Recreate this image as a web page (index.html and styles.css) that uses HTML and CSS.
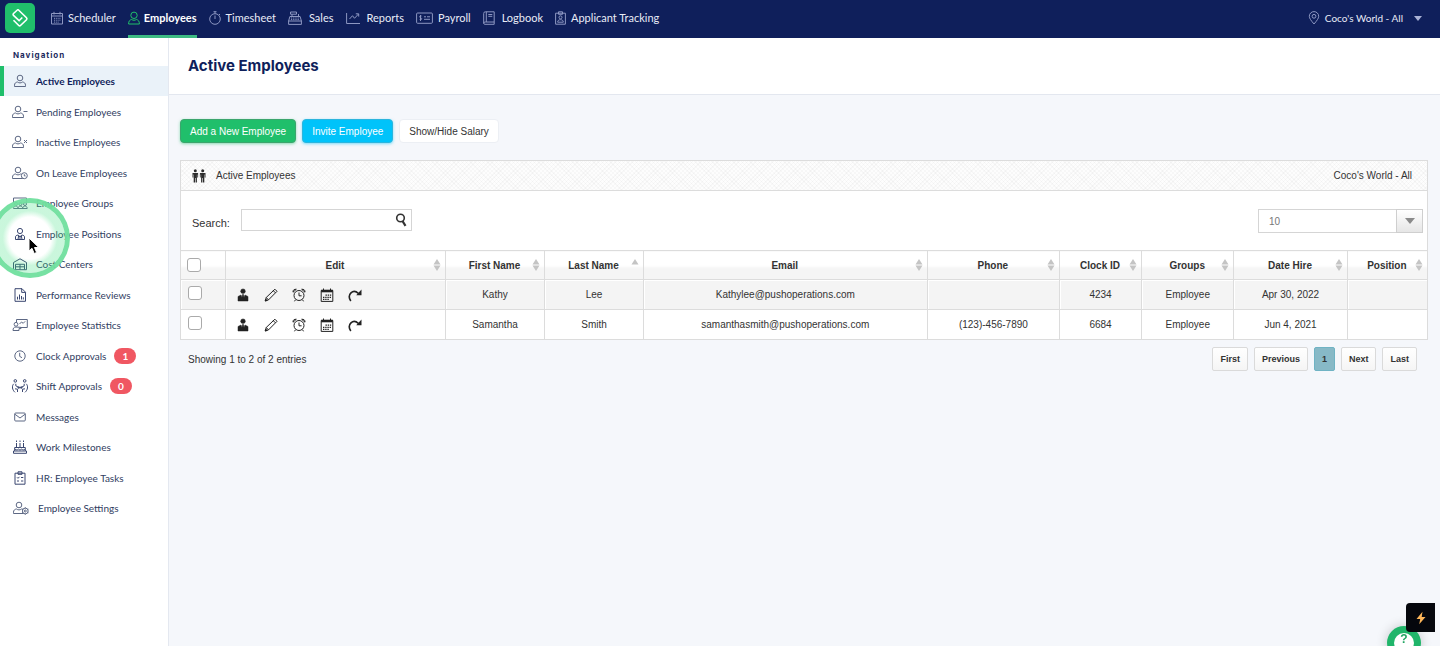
FILE: index.html
```html
<!DOCTYPE html>
<html lang="en">
  <head>
    <meta charset="utf-8">
    <title>Active Employees</title>
    <link rel="stylesheet" href="styles.css">
  </head>

  <body>
    <!-- shared icons -->
    <svg class="sprite" aria-hidden="true">
      <symbol id="i-user" viewBox="0 0 14 14"><circle cx="7" cy="4" r="2.800"/><path d="M1.500 12.500v-1.300c0-2 1.300-3 3-3.200 1.600 1.200 3.400 1.200 5 0 1.700.2 3 1.200 3 3.200v1.300z"/></symbol>
      <symbol id="i-sort" viewBox="0 0 8 12"><path d="M4 0l3.500 5.500h-7zM4 12L.5 6.500h7z"/></symbol>
      <symbol id="i-sort-asc" viewBox="0 0 8 12"><path d="M4 0l3.500 5.500h-7z"/></symbol>
      <symbol id="i-profile" viewBox="0 0 14 14"><circle cx="7" cy="3.200" r="2.300"/><path d="M2 13V8.500L5 7l1 2.500.5-3h1l.5 3L9 7l3 1.500V13z"/></symbol>
      <symbol id="i-pencil" viewBox="0 0 14 14"><path d="M1.300 12.900l.9-3.400 8.700-8.300 2.100 2.100-8.500 8.600zM2.200 9.500l2.300 2.400M9.300 2.700l2.100 2.100"/><path d="M1.200 13l1.900-.5-1.400-1.400z" fill="currentColor"/></symbol>
      <symbol id="i-alarm" viewBox="0 0 14 14"><circle cx="7" cy="7.500" r="5"/><path d="M7 4.500v3.300h2.600M3.500 11.700l-1 1.600M10.500 11.700l1 1.600M1 4.200c-.2-2.200 1.300-3.200 3.300-2.900zM13 4.200c.2-2.200-1.300-3.200-3.300-2.900z"/></symbol>
      <symbol id="i-calendar" viewBox="0 0 14 14"><path d="M1.200 2.500h11.600v10.900H1.200z"/><path d="M1.200 3h11.600" stroke-width="2.600"/><path d="M3.500.5v2M10.500.5v2"/><path d="M5.500 7.200h5.700M3 9.300h8.200M3 11.400h6" stroke-width="1.300" stroke-dasharray="1.400 .8"/></symbol>
      <symbol id="i-redo" viewBox="0 0 14 14"><path d="M2.800 13C-1.500 6.500 5 .5 10.500 5.500" fill="none" stroke-width="1.600"/><path d="M13.500 1.500v5.800H8.200z" stroke="none"/></symbol>
    </svg>

    <header class="topbar">
      <a class="logo" href="#" aria-label="Push">
        <svg viewBox="0 0 30 30"><path d="M13 6.500l8.500 8.300a1.500 1.500 0 0 1 0 2L15.500 22.500a1.200 1.200 0 0 1-1.700 0l-5.300-5.300M12.900 6.500l-4.400 4a1.300 1.300 0 0 0 0 1.900l5.600 5.300 3.200-3.200"/></svg>
      </a>
      <nav class="mainnav">
        <a href="#">
          <svg width="12" height="14" viewBox="0 0 12 14"><path d="M.5 2.500h11v10.500H.5zM.5 5h11M3 .8v2.700M9 .8v2.700"/><path d="M3 7.300h7M3 9.200h7M3 11.100h5" stroke-dasharray="1.200 1"/></svg>
          Scheduler
        </a>
        <a class="active" href="#">
          <svg width="12" height="14" viewBox="0 0 12 14"><circle cx="6" cy="4.300" r="3.200"/><path d="M.6 13c0-2.800 1-4 3-4.500 1.500 1 3.300 1 4.800 0 2 .5 3 1.700 3 4.500z"/></svg>
          Employees
        </a>
        <a href="#">
          <svg width="12" height="14" viewBox="0 0 12 14"><circle cx="6" cy="8" r="5.300"/><path d="M6 4.500V8M4.500.7h3M6 .7v2M10 3l1 1"/></svg>
          Timesheet
        </a>
        <a class="wide" href="#">
          <svg width="14" height="14" viewBox="0 0 14 14"><path d="M.6 10h12.800v3.400H.6zM.6 10l1.300-4.500h10.200L13.400 10M2.500 1h6v2.200h-6zM4 3.200v2.300M10.500 3v2.500"/><path d="M3 7h8M3 8.600h8" stroke-dasharray="1.200 1"/></svg>
          Sales
        </a>
        <a class="wide" href="#">
          <svg width="14" height="14" viewBox="0 0 14 14"><path d="M.6 2v10.500H14M3.500 8l3-3.300 2 2.600L12.500 3M9.800 2.800h2.900v2.800"/></svg>
          Reports
        </a>
        <a href="#">
          <svg width="17" height="14" viewBox="0 0 17 14"><rect x=".6" y="2" width="15.800" height="10.300" rx="1"/><path d="M5.500 5c-2-.7-2.400 1.400-1 1.700 2 .5 1.500 2.500-.8 1.800M4.500 4v6M8 5.800h2M11 5.800h3M8 8.300h6"/></svg>
          Payroll
        </a>
        <a class="wide" href="#">
          <svg width="12" height="14" viewBox="0 0 12 14"><path d="M2.500.8h8.700v10.200H2.500a1.500 1.500 0 0 0-1.800 1.300V2.500A1.700 1.700 0 0 1 2.500.8zM.7 12.200c0 .8.600 1.100 1.300 1.100h9.200V11M3.300.8V11M5.300 3.500h4M5.300 5.300h4"/></svg>
          Logbook
        </a>
        <a href="#">
          <svg width="11" height="14" viewBox="0 0 11 14"><path d="M.6 2.200h9.800v11H.6zM3.500.8h4v2.500h-4z"/><circle cx="5.500" cy="6.300" r="1.500"/><path d="M2.700 11.200c0-1.700 1-2.500 2.800-2.500s2.800.8 2.800 2.500z"/></svg>
          Applicant Tracking
        </a>
      </nav>
      <button class="location" type="button">
        <svg width="12" height="14" viewBox="0 0 12 14"><path d="M6 13C3 9.500 1.300 7.300 1.300 5.300a4.700 4.700 0 0 1 9.400 0C10.700 7.300 9 9.500 6 13z"/><circle cx="6" cy="5.300" r="1.900"/></svg>
        Coco's World - All
        <span class="caret"></span>
      </button>
    </header>

    <div class="page">
      <aside class="sidebar">
        <h2>Navigation</h2>
        <ul>
          <li><a class="active" href="#"><svg viewBox="0 0 16 14"><use href="#i-user" x="1" width="14" height="14"/></svg>Active Employees</a></li>
          <li><a href="#"><svg viewBox="0 0 16 14"><use href="#i-user" x="-1" width="14" height="14"/><path d="M11.500 6.500h4"/></svg>Pending Employees</a></li>
          <li><a href="#"><svg viewBox="0 0 16 14"><use href="#i-user" x="-1" width="14" height="14"/><path d="M12 5l3 3M15 5l-3 3"/></svg>Inactive Employees</a></li>
          <li><a href="#"><svg viewBox="0 0 16 14"><use href="#i-user" x="-1" width="14" height="14"/><circle cx="12.300" cy="9.700" r="3" fill="#fff"/><path d="M12.300 8.200v1.700h1.300"/></svg>On Leave Employees</a></li>
          <li><a href="#"><svg viewBox="0 0 16 14"><path d="M1.500 7V2h13v5"/><circle cx="4" cy="8" r="1.500"/><circle cx="8.500" cy="8" r="1.500"/><circle cx="13" cy="8" r="1.500"/><path d="M1.500 12.500c0-3.300 4.500-3.300 4.500 0 0-3.300 4.700-3.300 4.700 0 0-3.300 4.500-3.300 4.500 0z"/></svg>Employee Groups</a></li>
          <li><a href="#"><svg class="strong" viewBox="0 0 16 14"><circle cx="8" cy="4" r="2.600"/><path d="M3.500 12.500V10c0-1.200 1-1.800 2.700-2L8 10l1.800-2c1.700.2 2.700.8 2.700 2v2.500zM8 10v2.500M6.700 8.500l-.7 4M9.300 8.500l.7 4"/></svg>Employee Positions</a></li>
          <li><a href="#"><svg class="strong" viewBox="0 0 16 14"><path d="M1.500 12.700V5.500L8 1.800l6.500 3.700v7.200zM3.500 12.500V7.300h9v5.200M3.500 9.800h9M8 7.300v5.200"/></svg>Cost Centers</a></li>
          <li><a href="#"><svg class="strong" viewBox="0 0 16 14"><path d="M3 .7h7l3.500 3.500v9.100H3zM9.700.7v3.700h3.800M5.500 11.500V8.700M7.500 11.500V6.500M9.500 11.500V8M11.300 11.500V9.300"/></svg>Performance Reviews</a></li>
          <li><a href="#"><svg viewBox="0 0 16 14"><path d="M4.500 4V1.500h10.800v8H8.500M7.500 6l2-2 1.700 1.300 2-2"/><circle cx="4" cy="6.300" r="1.900"/><path d="M1 12.500c0-2.200.8-3.500 3-3.500l5 .4 0 1.200H7v1.900z"/></svg>Employee Statistics</a></li>
          <li><a href="#"><svg viewBox="0 0 16 14"><circle cx="8" cy="7" r="5.200"/><path d="M7.700 3.800v3.600l2.300 1.300"/></svg>Clock Approvals <span class="badge">1</span></a></li>
          <li><a href="#"><svg class="strong" viewBox="0 0 16 14"><circle cx="3.300" cy="1.900" r="1.300"/><circle cx="12.700" cy="1.900" r="1.300"/><path d="M1.800 4.800C-.5 7 .3 11 3 13.300M14.200 4.800c2.300 2.200 1.500 6.200-1.200 8.500M3.800 4.800v2l2.700 1.400M12.200 4.800v2L9.500 8.200M3 9.800l2.500.4v2.800M13 9.800l-2.500.4v2.800M5.500 8.600h5M6.800 7.200v2.700M9.200 7.200v2.700"/></svg>Shift Approvals <span class="badge">0</span></a></li>
          <li><a href="#"><svg viewBox="0 0 16 14"><rect x="2.700" y="3" width="10.600" height="8" rx="1"/><path d="M3 4.300l5 3.700 5-3.700"/></svg>Messages</a></li>
          <li><a href="#"><svg class="strong" viewBox="0 0 16 14"><path d="M2.700 11V7.500h10.600V11M1.500 11h13v2.300h-13zM2.700 9c1.800 1.200 2.600 1.200 3.600 0 1.200 1.200 2.300 1.200 3.500 0 1 1.200 2 1.200 3.500 0M4.500 7.500V3M8 7.500V3M11.500 7.500V3M4.500.5v1.500M8 .5v1.500M11.500.5v1.500"/></svg>Work Milestones</a></li>
          <li><a href="#"><svg class="strong" viewBox="0 0 16 14"><path d="M3 2.200h10v11H3zM6 .8h4v2.500H6zM5 6.300l1 1 1.500-1.500M9 6.500h2.300M5 10h2M9 10h2.300"/></svg>HR: Employee Tasks</a></li>
          <li><a class="settings" href="#"><svg viewBox="0 0 16 14"><use href="#i-user" x="-1" width="14" height="14"/><circle cx="12.300" cy="10" r="2.900" fill="#fff"/><circle cx="12.300" cy="10" r="1"/><path d="M12.300 6.300v1M12.300 12.700v1M9.200 8.200l.9.500M14.500 11.300l.9.500M9.200 11.800l.9-.5M14.500 8.700l.9-.5"/></svg>Employee Settings</a></li>
        </ul>
      </aside>

      <main>
        <div class="titlebar">
          <h1>Active Employees</h1>
        </div>

        <div class="content">
          <div class="actions">
            <button class="btn btn-green" type="button">Add a New Employee</button>
            <button class="btn btn-blue" type="button">Invite Employee</button>
            <button class="btn" type="button">Show/Hide Salary</button>
          </div>

          <section class="panel">
            <div class="panel-head">
              <svg width="14" height="14" viewBox="0 0 14 14"><circle cx="3.300" cy="1.800" r="1.500"/><circle cx="10.700" cy="1.800" r="1.500"/><path d="M.5 4h5.600v4.500H5.300V5.500h-.4V13.500H3.600V9h-.6v4.500H1.700V5.500h-.4v3H.5zM7.900 4h5.600v4.500h-.8V5.500h-.4v8H11V9h-.6v4.500H9.100v-8h-.4v3h-.8z"/></svg>
              <span>Active Employees</span>
              <span class="where">Coco's World - All</span>
            </div>

            <div class="toolbar">
              <label for="search">Search:</label>
              <div class="search">
                <input id="search" type="text">
                <svg width="12" height="14" viewBox="0 0 12 14"><circle cx="5.500" cy="5" r="3.800"/><path d="M7.500 8l3 4.800" stroke-width="2.200"/></svg>
              </div>
              <div class="length">
                <select aria-label="Entries per page">
                  <option>10</option>
                  <option>25</option>
                  <option>50</option>
                </select>
                <span class="arrow"></span>
              </div>
            </div>

            <table>
              <colgroup>
                <col class="c-check"><col class="c-edit"><col class="c-first"><col class="c-last"><col class="c-email">
                <col class="c-phone"><col class="c-clock"><col class="c-groups"><col class="c-hire"><col class="c-position">
              </colgroup>
              <thead>
                <tr>
                  <th class="check"><input type="checkbox" aria-label="Select all"></th>
                  <th><button type="button"><span>Edit</span><svg><use href="#i-sort"/></svg></button></th>
                  <th><button type="button"><span>First Name</span><svg><use href="#i-sort"/></svg></button></th>
                  <th><button type="button"><span>Last Name</span><svg><use href="#i-sort-asc"/></svg></button></th>
                  <th><button type="button"><span>Email</span><svg><use href="#i-sort"/></svg></button></th>
                  <th><button type="button"><span>Phone</span><svg><use href="#i-sort"/></svg></button></th>
                  <th><button type="button"><span>Clock ID</span><svg><use href="#i-sort"/></svg></button></th>
                  <th><button type="button"><span>Groups</span><svg><use href="#i-sort"/></svg></button></th>
                  <th><button type="button"><span>Date Hire</span><svg><use href="#i-sort"/></svg></button></th>
                  <th><button type="button"><span>Position</span><svg><use href="#i-sort"/></svg></button></th>
                </tr>
              </thead>
              <tbody>
                <tr>
                  <td class="check"><input type="checkbox" aria-label="Select Kathy Lee"></td>
                  <td>
                    <div class="edit">
                      <a href="#" aria-label="Profile"><svg class="solid"><use href="#i-profile"/></svg></a>
                      <a href="#" aria-label="Edit"><svg><use href="#i-pencil"/></svg></a>
                      <a href="#" aria-label="Punches"><svg><use href="#i-alarm"/></svg></a>
                      <a href="#" aria-label="Schedule"><svg><use href="#i-calendar"/></svg></a>
                      <a href="#" aria-label="Transfer"><svg class="solid"><use href="#i-redo"/></svg></a>
                    </div>
                  </td>
                  <td>Kathy</td>
                  <td>Lee</td>
                  <td>Kathylee@pushoperations.com</td>
                  <td></td>
                  <td>4234</td>
                  <td>Employee</td>
                  <td>Apr 30, 2022</td>
                  <td></td>
                </tr>
                <tr>
                  <td class="check"><input type="checkbox" aria-label="Select Samantha Smith"></td>
                  <td>
                    <div class="edit">
                      <a href="#" aria-label="Profile"><svg class="solid"><use href="#i-profile"/></svg></a>
                      <a href="#" aria-label="Edit"><svg><use href="#i-pencil"/></svg></a>
                      <a href="#" aria-label="Punches"><svg><use href="#i-alarm"/></svg></a>
                      <a href="#" aria-label="Schedule"><svg><use href="#i-calendar"/></svg></a>
                      <a href="#" aria-label="Transfer"><svg class="solid"><use href="#i-redo"/></svg></a>
                    </div>
                  </td>
                  <td>Samantha</td>
                  <td>Smith</td>
                  <td>samanthasmith@pushoperations.com</td>
                  <td>(123)-456-7890</td>
                  <td>6684</td>
                  <td>Employee</td>
                  <td>Jun 4, 2021</td>
                  <td></td>
                </tr>
              </tbody>
            </table>
          </section>

          <div class="table-foot">
            <p>Showing 1 to 2 of 2 entries</p>
            <div class="pager">
              <button type="button">First</button>
              <button type="button">Previous</button>
              <button class="current" type="button">1</button>
              <button type="button">Next</button>
              <button type="button">Last</button>
            </div>
          </div>
        </div>
      </main>
    </div>

    <!-- click highlight and pointer -->
    <div class="pulse"></div>
    <svg class="pointer" viewBox="0 0 12 18"><path d="M1 1v13l3-2.700L6.200 16.500l2.400-1L6.500 10.500h4.300z"/></svg>

    <button class="help" type="button" aria-label="Help"><span>?</span></button>
    <button class="bolt" type="button" aria-label="Quick actions">
      <svg width="12" height="14" viewBox="0 0 12 14"><path d="M7.500.8L1.500 8h3.700l-1 5.200L10.500 6H6.700z"/></svg>
    </button>
  </body>
</html>
```
FILE: styles.css
```css
* {
  box-sizing: border-box;
}

body {
  display: flex;
  flex-direction: column;
  min-height: 100vh;
  margin: 0;
  background: #f5f7fb;
  color: #333;
  font-family: "Liberation Sans", Arial, sans-serif;
  font-size: 10px;
}

a {
  color: inherit;
  text-decoration: none;
}

button,
input,
select {
  font: inherit;
  color: inherit;
}

button {
  cursor: pointer;
}

svg {
  fill: none;
  stroke: currentColor;
  flex-shrink: 0;
}

.sprite {
  position: absolute;
  width: 0;
  height: 0;
}

/* top bar */

.topbar {
  display: flex;
  align-items: center;
  height: 38px;
  padding: 0 18px 0 5px;
  background: #0f1f5b;
  color: #e9ecf7;
  font-family: Lato, sans-serif;
}

.logo {
  width: 30px;
  height: 30px;
  margin: 0 16px 2px 0;
  border-radius: 5px;
  background: #20bf6b;
}

.logo svg {
  display: block;
  stroke: #fff;
  stroke-width: 1.6;
}

.mainnav {
  display: flex;
  align-self: stretch;
  gap: 12px;
  font-size: 11px;
}

.mainnav a {
  display: flex;
  align-items: center;
  gap: 5px;
  border-bottom: 3px solid transparent;
  white-space: nowrap;
}

.mainnav a.wide {
  gap: 7px;
}

.mainnav svg,
.location svg {
  stroke: #8d97c2;
}

.mainnav a.active {
  gap: 4px;
  border-color: #3dba82;
  color: #fff;
  font-weight: 700;
}

.mainnav a.active svg {
  stroke: #20bf6b;
}

.location {
  display: flex;
  align-items: center;
  gap: 5px;
  margin-left: auto;
  padding: 0 0 2px;
  border: 0;
  background: none;
}

.caret {
  margin-left: 6px;
  border: 4px solid transparent;
  border-top: 5px solid #aab2d5;
  border-bottom: 0;
}

/* sidebar */

.page {
  display: flex;
  flex: 1;
}

.sidebar {
  flex: 0 0 169px;
  border-right: 1px solid #e4e8f0;
  background: #fff;
  color: #303d61;
  font-family: Lato, sans-serif;
}

.sidebar h2 {
  margin: 0;
  padding: 10px 13px 4px;
  color: #1d2b5e;
  font-family: Inter, sans-serif;
  font-size: 8px;
  font-weight: 700;
  letter-spacing: 1px;
  line-height: 14px;
}

.sidebar ul {
  margin: 0;
  padding: 0;
  list-style: none;
}

.sidebar li:nth-child(even) {
  margin-top: 1px;
}

.sidebar a {
  display: flex;
  align-items: center;
  height: 30px;
  padding-left: 12px;
}

.sidebar a.active {
  padding-left: 8px;
  border-left: 4px solid #20bf6b;
  background: #eaf2f9;
  color: #0f1f5b;
  font-weight: 700;
}

.sidebar svg {
  width: 16px;
  height: 14px;
  margin-right: 8px;
  stroke: #5d6884;
}

.sidebar svg.strong {
  stroke: #3a4770;
}

.sidebar a.settings {
  padding-left: 13px;
}

.sidebar a.settings svg {
  margin-right: 9px;
}

.badge {
  margin-left: 8px;
  padding: 0 8px;
  border-radius: 8px;
  background: #f05762;
  color: #fff;
  font-weight: 700;
  line-height: 16px;
}

/* main column */

main {
  flex: 1;
  min-width: 0;
}

.titlebar {
  padding: 18px 19px;
  border-bottom: 1px solid #e3e7ef;
  background: #fff;
}

h1 {
  margin: 0;
  color: #0f1f5b;
  font-family: Inter, sans-serif;
  font-size: 15px;
  font-weight: 700;
  line-height: 20px;
}

.content {
  padding: 24px 12px 0 11px;
}

.actions {
  display: flex;
  gap: 6px;
  margin-bottom: 17px;
}

.btn {
  height: 24px;
  padding: 0 9px;
  border: 1px solid #eceff4;
  border-radius: 4px;
  background: #fff;
}

.btn-green {
  border-color: #3ca56d;
  background: #20bf6b;
  color: #fff;
  box-shadow: 0 1px 3px rgba(32, 191, 107, 0.5);
}

.btn-blue {
  border-color: #2cb5dd;
  background: #00c3fa;
  color: #fff;
  box-shadow: 0 1px 3px rgba(0, 195, 250, 0.5);
}

.panel {
  border: 1px solid #dcdcdc;
  border-bottom: 0;
  background: #fff;
}

.panel-head {
  display: flex;
  align-items: center;
  gap: 10px;
  height: 30px;
  padding: 0 15px 0 11px;
  border-bottom: 1px solid #dcdcdc;
  background-color: #fdfdfd;
  background-image:
    repeating-linear-gradient(45deg, transparent 0 2px, rgba(0, 0, 0, 0.022) 2px 3px),
    repeating-linear-gradient(-45deg, transparent 0 2px, rgba(0, 0, 0, 0.022) 2px 3px);
}

.panel-head svg {
  fill: #2b2b2b;
  stroke: none;
}

.where {
  margin-left: auto;
}

.toolbar {
  display: flex;
  align-items: flex-start;
  height: 59px;
  padding: 18px 4px 0 11px;
}

.toolbar label {
  margin-right: 11px;
  font-size: 11px;
  line-height: 28px;
}

.search {
  display: flex;
  align-items: center;
  width: 171px;
  height: 22px;
  padding-right: 4px;
  border: 1px solid #d5d5d5;
}

.search input {
  flex: 1;
  min-width: 0;
  padding: 0 6px;
  border: 0;
  outline: 0;
  background: none;
}

.search svg {
  stroke: #333;
  stroke-width: 1.6;
}

.length {
  display: flex;
  position: relative;
  width: 165px;
  height: 24px;
  margin-left: auto;
}

.length select {
  width: 100%;
  padding: 0 36px 0 10px;
  border: 1px solid #d5d5d5;
  border-radius: 0;
  background: #fff;
  color: #777;
  appearance: none;
}

.arrow {
  display: grid;
  place-items: center;
  position: absolute;
  top: 0;
  right: 0;
  width: 27px;
  height: 24px;
  border: 1px solid #cfcfcf;
  background: linear-gradient(#fff, #e6e6e6);
  pointer-events: none;
}

.arrow::after {
  content: "";
  border: 5px solid transparent;
  border-top: 6px solid #8a8a8a;
  border-bottom: 0;
}

/* employees table */

table {
  width: 100%;
  border-collapse: collapse;
  table-layout: fixed;
}

.c-check { width: 3.6%; }
.c-edit { width: 17.6%; }
.c-first { width: 8%; }
.c-last { width: 7.9%; }
.c-email { width: 22.8%; }
.c-phone { width: 10.6%; }
.c-clock { width: 6.6%; }
.c-groups { width: 7.4%; }
.c-hire { width: 9.1%; }
.c-position { width: 6.4%; }

th,
td {
  height: 30px;
  padding: 0;
  border: 1px solid #dcdcdc;
  text-align: center;
}

tr > :first-child {
  border-left: 0;
}

tr > :last-child {
  border-right: 0;
}

th {
  height: 29px;
  background: linear-gradient(#fff 50%, #f5f5f5 60%);
}

th button {
  display: grid;
  grid-template-columns: 1fr auto 1fr;
  align-items: center;
  width: 100%;
  padding: 0 4px 0 3px;
  border: 0;
  background: none;
  font-weight: 700;
  white-space: nowrap;
}

th button span {
  grid-column: 2;
}

th svg {
  justify-self: end;
  width: 8px;
  height: 12px;
  fill: #c4c4c4;
  stroke: none;
}

tbody tr:nth-child(odd) td {
  background: #f4f4f4;
  box-shadow: inset 1px 1px #fff;
}

.check {
  padding: 0 0 3px 7px;
  text-align: left;
}

th.check {
  padding: 0 0 0 6px;
}

.check input {
  display: block;
  width: 14px;
  height: 14px;
  margin: 0;
  border: 1px solid #aaa;
  border-radius: 3px;
  background: #fff;
  appearance: none;
}

.check input:checked {
  background: #20bf6b;
}

.edit {
  display: flex;
  gap: 14px;
  padding-left: 10px;
}

.edit svg {
  display: block;
  width: 14px;
  height: 14px;
  stroke: #222;
}

.edit .solid {
  fill: #222;
  stroke-width: 0.5;
}

.table-foot {
  display: flex;
  justify-content: space-between;
  align-items: center;
  padding: 7px 11px 0 8px;
}

.table-foot p {
  margin: 0;
}

.pager {
  display: flex;
  gap: 6px;
}

.pager button {
  height: 24px;
  padding: 0 7px;
  border: 1px solid #dadada;
  border-radius: 2px;
  background: linear-gradient(#fff, #f5f5f5);
  font-size: 9px;
  font-weight: 700;
}

.pager .current {
  border-color: #6fb3c4;
  background: #87b9c7;
}

/* overlays */

.pulse {
  position: absolute;
  top: 198px;
  left: -10px;
  width: 80px;
  height: 80px;
  border: 5px solid rgba(112, 223, 158, 0.95);
  border-radius: 50%;
  background: radial-gradient(circle closest-side, rgba(64, 224, 130, 0) 60%, rgba(64, 224, 130, 0.28) 78%);
  background-clip: padding-box;
  pointer-events: none;
}

.pointer {
  position: absolute;
  top: 237px;
  left: 28px;
  width: 12px;
  height: 18px;
  fill: #000;
  stroke: #fff;
  pointer-events: none;
}

.help {
  display: flex;
  justify-content: center;
  align-items: flex-start;
  position: fixed;
  right: 19px;
  bottom: -14px;
  width: 34px;
  height: 34px;
  padding: 7px 0 0;
  border: 0;
  border-radius: 50%;
  background: #20b56a;
  box-shadow: 0 0 12px rgba(0, 0, 0, 0.2);
}

.help span {
  width: 20px;
  height: 20px;
  border-radius: 50%;
  background: #fff;
  color: #20a562;
  font-size: 12px;
  font-weight: 700;
  line-height: 13px;
}

.bolt {
  display: grid;
  place-items: center;
  position: fixed;
  right: 5px;
  bottom: 14px;
  width: 29px;
  height: 29px;
  padding: 0;
  border: 0;
  border-radius: 4px 0 0 4px;
  background: #05070d;
}

.bolt svg {
  fill: #fdb65a;
  stroke: none;
}
```
